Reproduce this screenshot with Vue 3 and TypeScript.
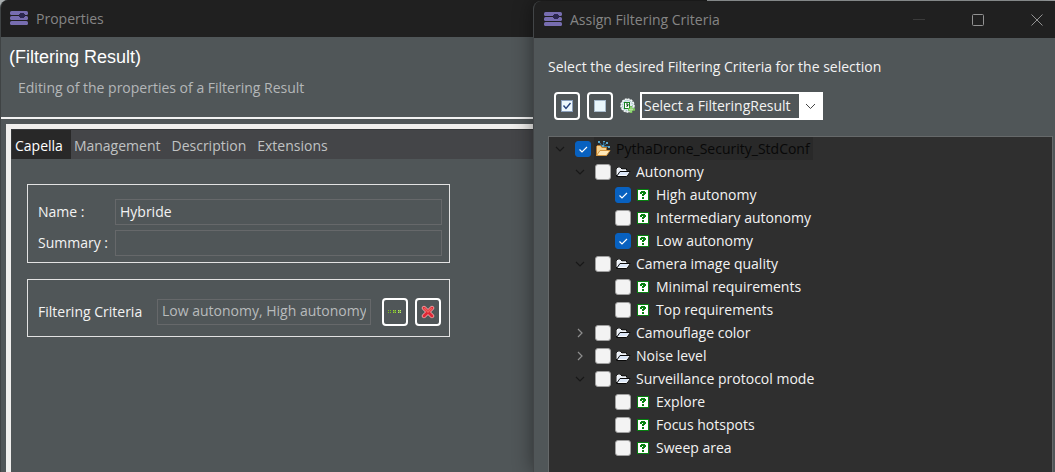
<script setup lang="ts">
import { ref } from 'vue'

interface Node {
  id: string
  label: string
  depth: number
  kind: 'project' | 'folder' | 'criterion'
  state?: 'open' | 'closed'
  checked: boolean
}

const tabs = ['Capella', 'Management', 'Description', 'Extensions']
const active = ref('Capella')
const name = ref('Hybride')
const summary = ref('')
const criteria = ref('Low autonomy, High autonomy')

const nodes = ref<Node[]>([
  { id: 'root', label: 'PythaDrone_Security_StdConf', depth: 0, kind: 'project', state: 'open', checked: true },
  { id: 'auto', label: 'Autonomy', depth: 1, kind: 'folder', state: 'open', checked: false },
  { id: 'high', label: 'High autonomy', depth: 2, kind: 'criterion', checked: true },
  { id: 'inter', label: 'Intermediary autonomy', depth: 2, kind: 'criterion', checked: false },
  { id: 'low', label: 'Low autonomy', depth: 2, kind: 'criterion', checked: true },
  { id: 'camera', label: 'Camera image quality', depth: 1, kind: 'folder', state: 'open', checked: false },
  { id: 'min', label: 'Minimal requirements', depth: 2, kind: 'criterion', checked: false },
  { id: 'top', label: 'Top requirements', depth: 2, kind: 'criterion', checked: false },
  { id: 'camo', label: 'Camouflage color', depth: 1, kind: 'folder', state: 'closed', checked: false },
  { id: 'noise', label: 'Noise level', depth: 1, kind: 'folder', state: 'closed', checked: false },
  { id: 'surv', label: 'Surveillance protocol mode', depth: 1, kind: 'folder', state: 'open', checked: false },
  { id: 'explore', label: 'Explore', depth: 2, kind: 'criterion', checked: false },
  { id: 'focus', label: 'Focus hotspots', depth: 2, kind: 'criterion', checked: false },
  { id: 'sweep', label: 'Sweep area', depth: 2, kind: 'criterion', checked: false },
])

function setAll(value: boolean) {
  nodes.value.forEach((n) => (n.checked = value))
}
</script>

<template>
  <div class="desktop">
    <section class="window properties" aria-label="Properties">
      <header class="titlebar">
        <svg class="logo" viewBox="0 0 18 15" aria-hidden="true">
          <g fill="#776db0">
            <rect y="0" width="18" height="4" rx="1.5" />
            <rect y="5" width="18" height="4" rx="1.5" />
            <rect y="10" width="18" height="4" rx="1.5" />
          </g>
          <path d="M10 2h4v1h1v3h-1v1h-4V6H9V3h1z" fill="#2b2750" />
        </svg>
        <span>Properties</span>
      </header>
      <div class="intro">
        <h1>(Filtering Result)</h1>
        <p>Editing of the properties of a Filtering Result</p>
      </div>
      <div class="body">
        <nav class="tabs" role="tablist">
          <button
            v-for="tab in tabs"
            :key="tab"
            type="button"
            role="tab"
            :aria-selected="tab === active"
            :class="{ active: tab === active }"
            @click="active = tab"
          >{{ tab }}</button>
        </nav>
        <div class="page">
          <div class="group fields">
            <label for="name">Name :</label>
            <input id="name" v-model="name" type="text" />
            <label for="summary">Summary :</label>
            <input id="summary" v-model="summary" type="text" />
          </div>
          <div class="group criteria">
            <label for="criteria">Filtering Criteria</label>
            <input id="criteria" :value="criteria" type="text" readonly />
            <button type="button" class="tool" aria-label="Browse">
              <svg width="14" height="4" viewBox="0 0 14 4" aria-hidden="true" shape-rendering="crispEdges">
                <path d="M0 0h1v1H0zM2 0h1v1H2zM0 2h1v1H0zM2 2h1v1H2z" fill="#7cbb1c" />
                <path d="M5 0h3v3H5z" fill="#628c3a" />
                <path d="M5 0h1v1H5zM7 0h1v1H7zM5 2h1v1H5zM7 2h1v1H7z" fill="#9ad03a" />
                <path d="M10 0h3v3h-3z" fill="#719c48" />
                <path d="M10 0h1v1h-1zM12 0h1v1h-1zM10 2h1v1h-1zM12 2h1v1h-1z" fill="#b9e36c" />
              </svg>
            </button>
            <button type="button" class="tool" aria-label="Clear" @click="criteria = ''">
              <svg width="14" height="14" viewBox="0 0 14 14" aria-hidden="true">
                <path d="M3 3l8 8M11 3l-8 8" stroke="#f3b0b0" stroke-width="4.4" stroke-linecap="round" />
                <path d="M3 3l8 8M11 3l-8 8" stroke="#df2735" stroke-width="3" stroke-linecap="round" />
                <path d="M3 3l4 4 4-4" fill="none" stroke="#ef625b" stroke-width="1.5" />
              </svg>
            </button>
          </div>
        </div>
      </div>
    </section>

    <section class="window dialog" role="dialog" aria-label="Assign Filtering Criteria">
      <header class="titlebar">
        <svg class="logo" viewBox="0 0 18 15" aria-hidden="true">
          <g fill="#776db0">
            <rect y="0" width="18" height="4" rx="1.5" />
            <rect y="5" width="18" height="4" rx="1.5" />
            <rect y="10" width="18" height="4" rx="1.5" />
          </g>
          <path d="M10 2h4v1h1v3h-1v1h-4V6H9V3h1z" fill="#2b2750" />
        </svg>
        <span>Assign Filtering Criteria</span>
        <div class="controls">
          <button type="button" aria-label="Minimize" disabled>
            <svg width="12" height="12" viewBox="0 0 12 12"><path d="M0 5.5h12" stroke="#3b3b3b" /></svg>
          </button>
          <button type="button" aria-label="Maximize">
            <svg width="12" height="12" viewBox="0 0 12 12"><rect x=".5" y=".5" width="11" height="11" rx="1" fill="none" stroke="#929292" /></svg>
          </button>
          <button type="button" aria-label="Close">
            <svg width="12" height="12" viewBox="0 0 12 12"><path d="M.5.5l11 11M11.5.5l-11 11" stroke="#929292" /></svg>
          </button>
        </div>
      </header>
      <p class="prompt">Select the desired Filtering Criteria for the selection</p>
      <div class="toolbar">
        <button type="button" class="tool" aria-label="Select all" @click="setAll(true)">
          <svg width="12" height="12" viewBox="0 0 12 12" aria-hidden="true">
            <rect x=".5" y=".5" width="11" height="11" fill="#eef8fd" stroke="#8ba0bd" />
            <path d="M2.5 5.5l2.500 3L9.500 3" fill="none" stroke="#26427c" stroke-width="1.4" />
          </svg>
        </button>
        <button type="button" class="tool" aria-label="Deselect all" @click="setAll(false)">
          <svg width="12" height="12" viewBox="0 0 12 12" aria-hidden="true">
            <rect x=".5" y=".5" width="11" height="11" fill="#eaf7fd" stroke="#a9bccd" />
          </svg>
        </button>
        <svg class="result" width="16" height="16" viewBox="0 0 16 16" aria-hidden="true">
          <circle cx="7.5" cy="7.5" r="6.5" fill="#e2f0f2" stroke="#f4f8f8" stroke-width="1.5" stroke-dasharray="2 1" />
          <circle cx="7.5" cy="7.5" r="5" fill="none" stroke="#8cabb3" stroke-dasharray="1 1" />
          <rect x="4.5" y="4.5" width="5" height="6" fill="#fff" stroke="#168320" />
          <path d="M6 6h2v1.5H7V9" fill="none" stroke="#0a3d10" />
          <path d="M11 8v7M8 11.500h7" stroke="#79c65b" stroke-width="2.5" />
          <path d="M11 9v5M9 11.500h4" stroke="#b6e59c" />
        </svg>
        <select aria-label="Filtering result">
          <option>Select a FilteringResult</option>
        </select>
      </div>
      <ul class="tree" role="tree">
        <li v-for="node in nodes" :key="node.id" :class="['d' + node.depth, node.kind]" role="treeitem">
          <span class="twisty">
            <svg v-if="node.state" width="10" height="10" viewBox="0 0 10 10" aria-hidden="true">
              <path v-if="node.state === 'open'" d="M1 3l4 4 4-4" fill="none" stroke="#181818" stroke-width="1.2" />
              <path v-else d="M3 1l4 4-4 4" fill="none" stroke="#8e8e8e" stroke-width="1.2" />
            </svg>
          </span>
          <input :id="node.id" v-model="node.checked" type="checkbox" />
          <label :for="node.id">
            <span class="icon">
              <svg v-if="node.kind === 'criterion'" width="12" height="12" viewBox="0 0 12 12" shape-rendering="crispEdges" aria-hidden="true">
                <rect width="12" height="12" fill="#078010" />
                <rect x="1" y="1" width="10" height="10" fill="#fff" />
                <path d="M4 2h4v1h1v2H8v1H7v1H5V5h1V4H5v1H3V3h1zM5 8h2v2H5z" fill="#078010" />
              </svg>
              <svg v-else-if="node.kind === 'folder'" width="16" height="12" viewBox="0 0 16 12" aria-hidden="true">
                <path d="M1.5 10.500v-8l1-1h3l1.500 1.500h4.500v3" fill="#e9eef6" stroke="#0a0a0a" />
                <path d="M2 9V3l1-1h2l1.500 2H11v1" fill="none" stroke="#f8fafc" />
                <path d="M1.500 10.500L5 5.500h10l-3.500 5z" fill="#dbe6f7" stroke="#0a0a0a" />
                <path d="M3 9.500h8.500l2.500-3.500" fill="none" stroke="#f8fafc" />
              </svg>
              <svg v-else width="16" height="16" viewBox="0 0 16 16" aria-hidden="true">
                <path d="M1.500 14.500v-9l1-1h3l1.500 2h4.500v3" fill="#f5d290" stroke="#b97829" />
                <path d="M1.500 14.500L5 9.500h10l-3.500 5z" fill="#ffe8b8" stroke="#d39640" />
                <path d="M4.500 1.500l3 4 4-3M7.500 5.500h6M8 5L9 1" fill="none" stroke="#337ca9" />
                <path d="M3 0h2v2H3zM11 1h2v2h-2zM7 4h2v2H7zM13 5h2v2h-2zM8 0h2v1H8z" fill="#59a6ca" />
              </svg>
            </span>
            <span class="text">{{ node.label }}</span>
          </label>
        </li>
      </ul>
    </section>
  </div>
</template>

<style>
body { background: #505658; }
</style>

<style scoped>
* { box-sizing: border-box; }
.desktop { position: relative; min-height: 100vh; overflow: hidden; background: #a8adae; color: #f3f3f3; font: 14px/20px "Open Sans", "Noto Sans", sans-serif; }
.window { background: #505658; }
.titlebar { display: flex; align-items: center; gap: 8px; height: 37px; padding: 0 0 0 10px; background: #202020; color: #858585; }
.logo { width: 18px; height: 15px; flex: none; }
button, input, select { margin: 0; font: inherit; color: inherit; }
button { padding: 0; border: 0; background: none; }
svg { display: block; flex: none; }

.properties { display: flex; flex-direction: column; width: 67%; min-height: 100vh; border-left: 1px solid #3f4344; border-top-left-radius: 8px; overflow: hidden; }
.properties .titlebar { padding-left: 9px; }
.intro { height: 82px; padding: 10px 8px 0; border-bottom: 2px solid #f2f2f2; }
h1 { margin: 0; font: 18px/20px "Liberation Sans", Arial, sans-serif; color: #fff; }
.intro p { margin: 11px 0 0 9px; color: #b4b7b8; }
.body { flex: 1; display: flex; flex-direction: column; margin: 5px 0 0 5px; border: solid #f0efed; border-width: 5px 0 0 5px; }
.tabs { display: flex; height: 30px; background: #444548; border-top: 1px solid #35383a; border-left: 1px solid #35383a; }
.tabs button { padding: 2px 8px 0 3px; color: #c0c2c3; }
.tabs .active { background: #282828; color: #fff; }
.page { display: flex; flex-direction: column; gap: 16px; width: 439px; padding: 25px 0 0 16px; }
.group { border: 1px solid #e2e2e2; padding-left: 10px; }
.group input { min-width: 0; height: 26px; padding: 0 4px 2px; border: 1px solid #66686a; border-radius: 0; background: transparent; outline: 0; }
.fields { display: grid; grid-template-columns: 72px 1fr; column-gap: 5px; row-gap: 5px; align-items: center; padding-top: 14px; padding-right: 7px; padding-bottom: 6px; }
.criteria { display: flex; align-items: center; height: 58px; padding-top: 7px; padding-right: 8px; }
.criteria label { width: 119px; }
.criteria input { flex: 1; color: #b8bbbc; margin-right: 11px; }
.tool { display: grid; place-items: center; width: 26px; height: 28px; border: 2px solid #fff; border-radius: 4px; }
.tool + .tool { margin-left: 7px; }

.dialog { position: absolute; top: 1px; right: 0; bottom: 0; left: 533px; display: flex; flex-direction: column; border-left: 1px solid #424547; border-top-left-radius: 8px; overflow: hidden; box-shadow: 0 0 20px rgba(0, 0, 0, .45); }
.controls { display: flex; gap: 47px; margin-left: auto; padding-right: 12px; }
.prompt { margin: 19px 0 0 14px; }
.toolbar { display: flex; align-items: center; margin: 15px 0 16px 20px; height: 28px; }
.result { margin: 0 4px 0 7px; }
select { width: 183px; height: 28px; padding: 0 0 0 2px; border: 2px solid #fff; border-radius: 0; appearance: none; background: url("data:image/svg+xml,%3Csvg xmlns='http://www.w3.org/2000/svg' width='22' height='24'%3E%3Cpath fill='white' d='M0 0h22v24H0z'/%3E%3Cpath d='M7 10l4.500 4.500L16 10' fill='none' stroke='%23444'/%3E%3C/svg%3E") right center no-repeat #505658; }
.tree { flex: 1; margin: 0 2px 0 14px; padding: 0; list-style: none; background: #2f2f2f; border: solid #66696a; border-width: 1px 1px 0 1px; }
.tree li { display: flex; align-items: center; height: 23px; padding-left: 6px; }
.tree .d1 { padding-left: 26px; }
.tree .d2 { padding-left: 46px; }
.twisty { width: 20px; }
.tree input { appearance: none; width: 16px; height: 16px; border: 1px solid #a0a0a0; border-radius: 3px; background: #f3f3f3; }
.tree input:checked { border-color: #0861c0; background: url("data:image/svg+xml,%3Csvg xmlns='http://www.w3.org/2000/svg' width='14' height='14'%3E%3Cpath d='M3.500 7.500L6 10l5-5' fill='none' stroke='white' stroke-width='1.200'/%3E%3C/svg%3E") center no-repeat #0861c0; }
.tree label { display: flex; align-items: center; height: 23px; margin-left: 3px; }
.icon { display: grid; place-items: center; width: 18px; }
.text { padding: 0 3px 0 4px; }
.project label { background: #292929; color: #080808; }
</style>
